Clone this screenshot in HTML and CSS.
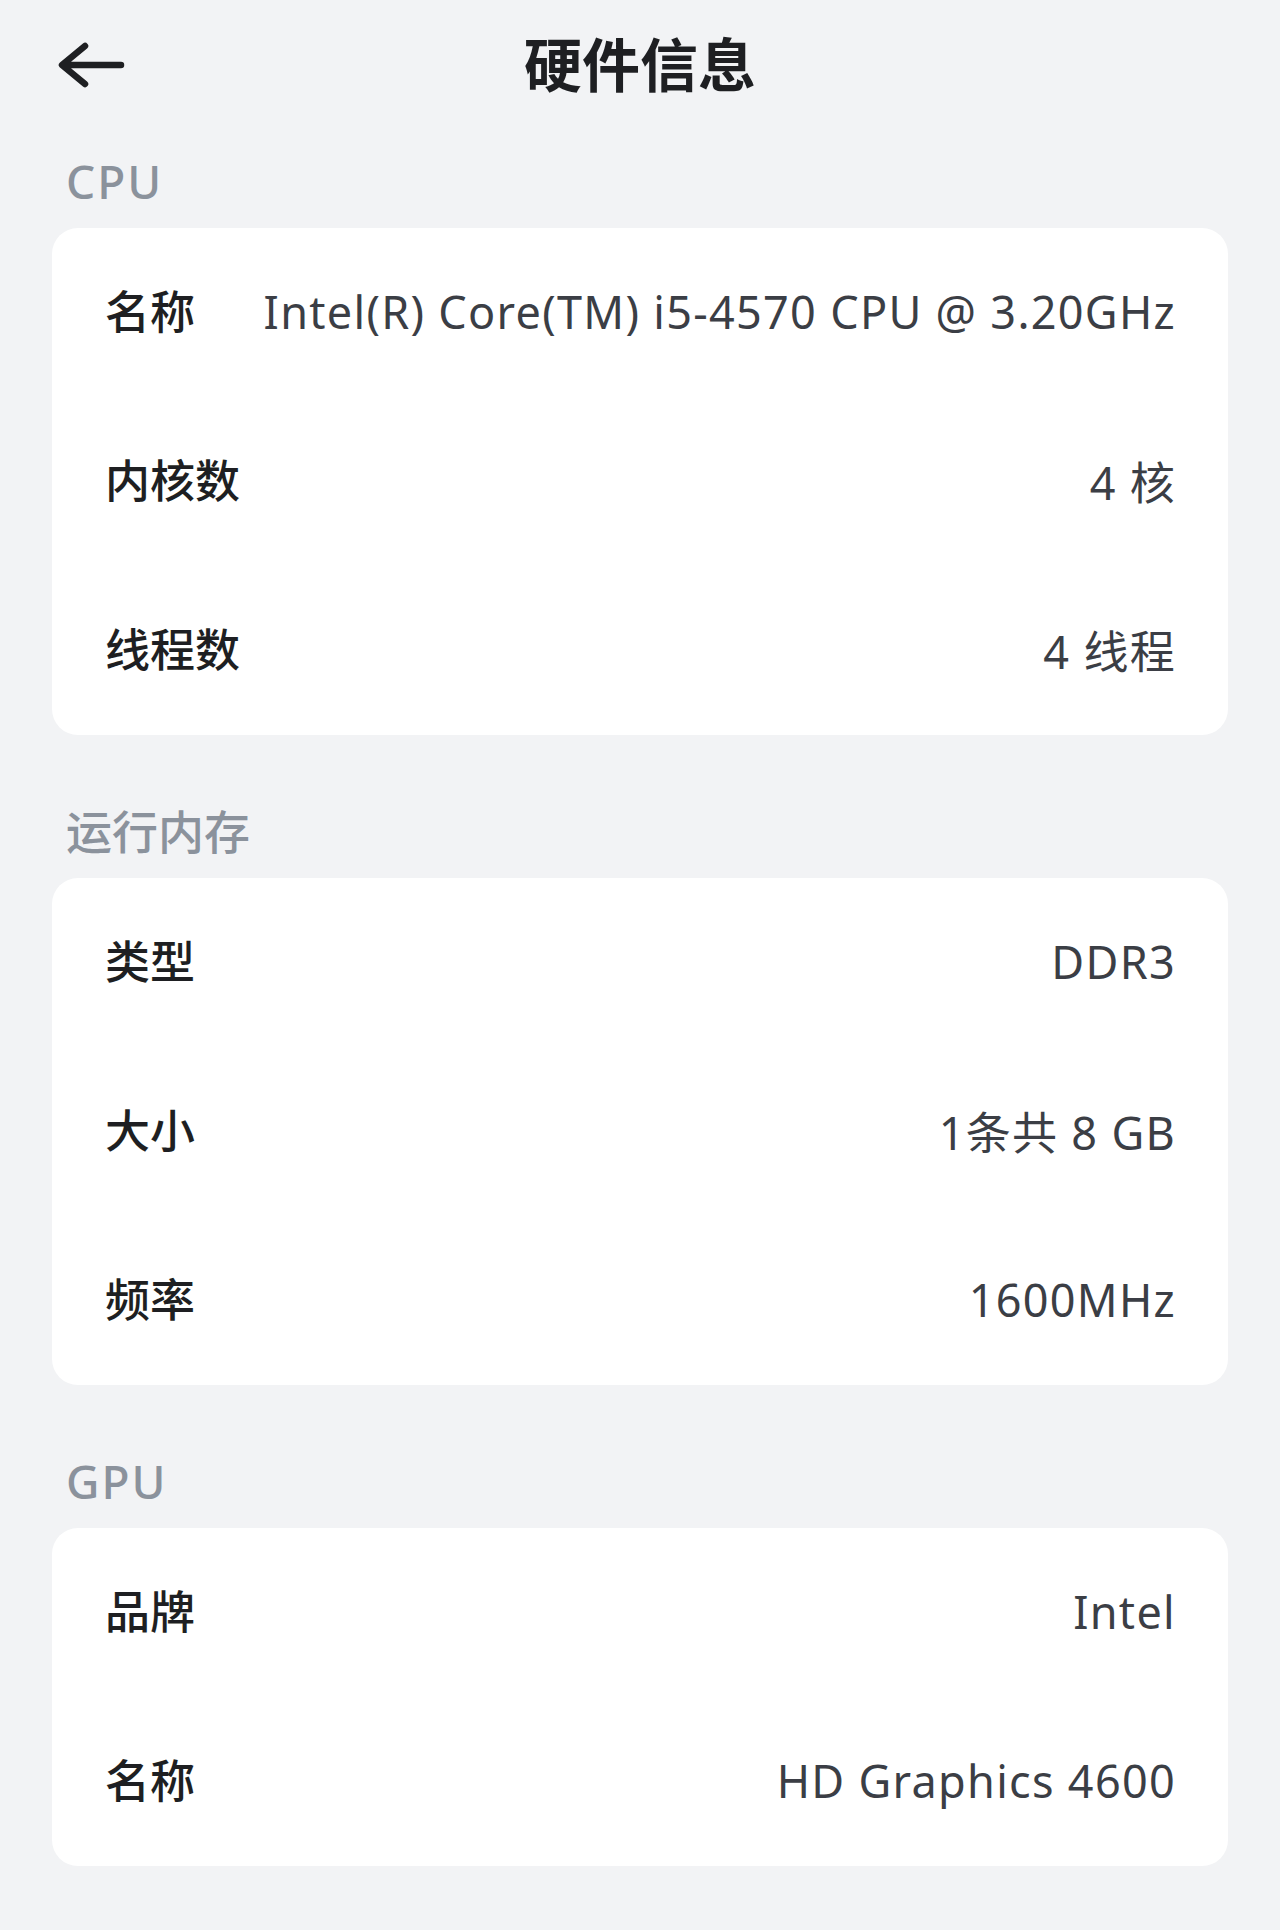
FILE: index.html
```html
<!DOCTYPE html>
<html lang="zh-CN">
<head>
<meta charset="utf-8">
<title>硬件信息</title>
<link rel="stylesheet" href="styles.css">
</head>
<body>
<header class="topbar">
  <div class="topbar-left">
    <svg class="back" viewBox="0 0 68 46" width="68" height="46" aria-hidden="true">
      <path d="M64 23 H6 M28 4 L5 23 L28 42" fill="none" stroke="#1e1f22" stroke-width="6.5" stroke-linecap="round" stroke-linejoin="round"/>
    </svg>
  </div>
  <h1 class="title">硬件信息</h1>
  <div class="topbar-right"></div>
</header>
<main class="content">
  <section class="section">
    <h2 class="section-title">CPU</h2>
    <div class="card">
      <div class="row"><span class="label">名称</span><span class="value">Intel(R) Core(TM) i5-4570 CPU @ 3.20GHz</span></div>
      <div class="row"><span class="label">内核数</span><span class="value">4 核</span></div>
      <div class="row"><span class="label">线程数</span><span class="value">4 线程</span></div>
    </div>
  </section>
  <section class="section">
    <h2 class="section-title section-title-cjk">运行内存</h2>
    <div class="card">
      <div class="row"><span class="label">类型</span><span class="value">DDR3</span></div>
      <div class="row"><span class="label">大小</span><span class="value">1条共 8 GB</span></div>
      <div class="row"><span class="label">频率</span><span class="value">1600MHz</span></div>
    </div>
  </section>
  <section class="section">
    <h2 class="section-title">GPU</h2>
    <div class="card">
      <div class="row"><span class="label">品牌</span><span class="value">Intel</span></div>
      <div class="row"><span class="label">名称</span><span class="value">HD Graphics 4600</span></div>
    </div>
  </section>
</main>
</body>
</html>
```
FILE: styles.css
```css
* { box-sizing: border-box; }
html, body {
  margin: 0;
  padding: 0;
}
body {
  background: #f2f3f5;
  font-family: "Noto Sans", "Noto Sans CJK SC", sans-serif;
  color: #1e1f22;
  min-height: 1930px;
}
.topbar {
  height: 130px;
  display: grid;
  grid-template-columns: 1fr auto 1fr;
  align-items: center;
}
.topbar-left {
  padding-left: 57px;
  display: flex;
  align-items: center;
}
.back { display: block; }
.title {
  margin: 0;
  padding-bottom: 6px;
  font-family: "Noto Sans CJK SC", sans-serif;
  font-size: 58px;
  font-weight: 700;
  line-height: 1;
  color: #1e1f22;
}
.content {
  display: flex;
  flex-direction: column;
  gap: 65px;
  padding: 20px 52px 0;
}
.section-title {
  margin: 0;
  padding: 0 0 16px 14px;
  font-family: "Noto Sans", "Noto Sans CJK SC", sans-serif;
  font-size: 46px;
  font-weight: 500;
  line-height: 62px;
  letter-spacing: 2px;
  color: #8b929c;
}
.section-title-cjk {
  letter-spacing: 0;
}
.card {
  background: #ffffff;
  border-radius: 26px;
  padding: 0 52px 0 53px;
}
.row {
  height: 169px;
  display: flex;
  align-items: center;
  justify-content: space-between;
}
.label {
  padding-bottom: 7px;
  font-family: "Noto Sans CJK SC", sans-serif;
  font-size: 45px;
  font-weight: 500;
  color: #1e1f22;
  white-space: nowrap;
}
.value {
  padding-bottom: 3px;
  font-family: "Noto Sans", "Noto Sans CJK SC", sans-serif;
  font-size: 45px;
  font-weight: 400;
  letter-spacing: 1.3px;
  color: #3b3e45;
  white-space: nowrap;
}
```
